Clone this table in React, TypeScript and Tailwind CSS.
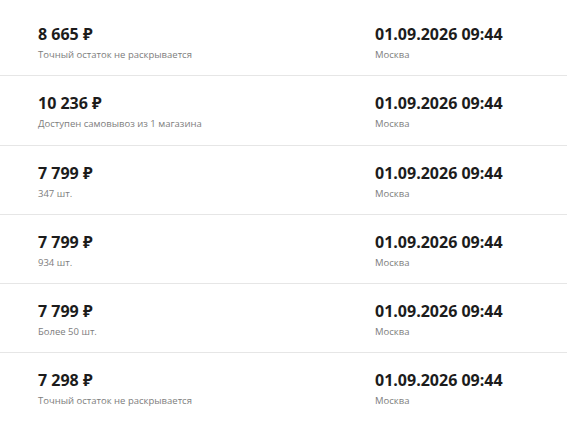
import React from "react";

const rows = [
  { price: "8 665 ₽", note: "Точный остаток не раскрывается" },
  { price: "10 236 ₽", note: "Доступен самовывоз из 1 магазина" },
  { price: "7 799 ₽", note: "347 шт." },
  { price: "7 799 ₽", note: "934 шт." },
  { price: "7 799 ₽", note: "Более 50 шт." },
  { price: "7 298 ₽", note: "Точный остаток не раскрывается" },
];

export default function App() {
  return (
    <div
      className="w-[567px] h-[441px] bg-white pt-[7px]"
      style={{ fontFamily: '"Open Sans", "Noto Sans", sans-serif' }}
    >
      {rows.map((r, i) => (
        <div
          key={i}
          className={
            "flex pl-[38px] pt-[17px] pb-[13.25px] " +
            (i < rows.length - 1 ? "border-b border-[#e6e6e6]" : "")
          }
        >
          <div className="w-[337px] flex flex-col">
            <div className="text-base leading-5 font-bold text-[#1c1c1c]">{r.price}</div>
            <div className="mt-[4px] text-[9.5px] leading-[14px] text-[#7d7d7d]">{r.note}</div>
          </div>
          <div className="flex flex-col">
            <div className="text-base leading-5 font-bold text-[#1c1c1c]">01.09.2026 09:44</div>
            <div className="mt-[4px] text-[9.5px] leading-[14px] text-[#7d7d7d]">Москва</div>
          </div>
        </div>
      ))}
    </div>
  );
}
